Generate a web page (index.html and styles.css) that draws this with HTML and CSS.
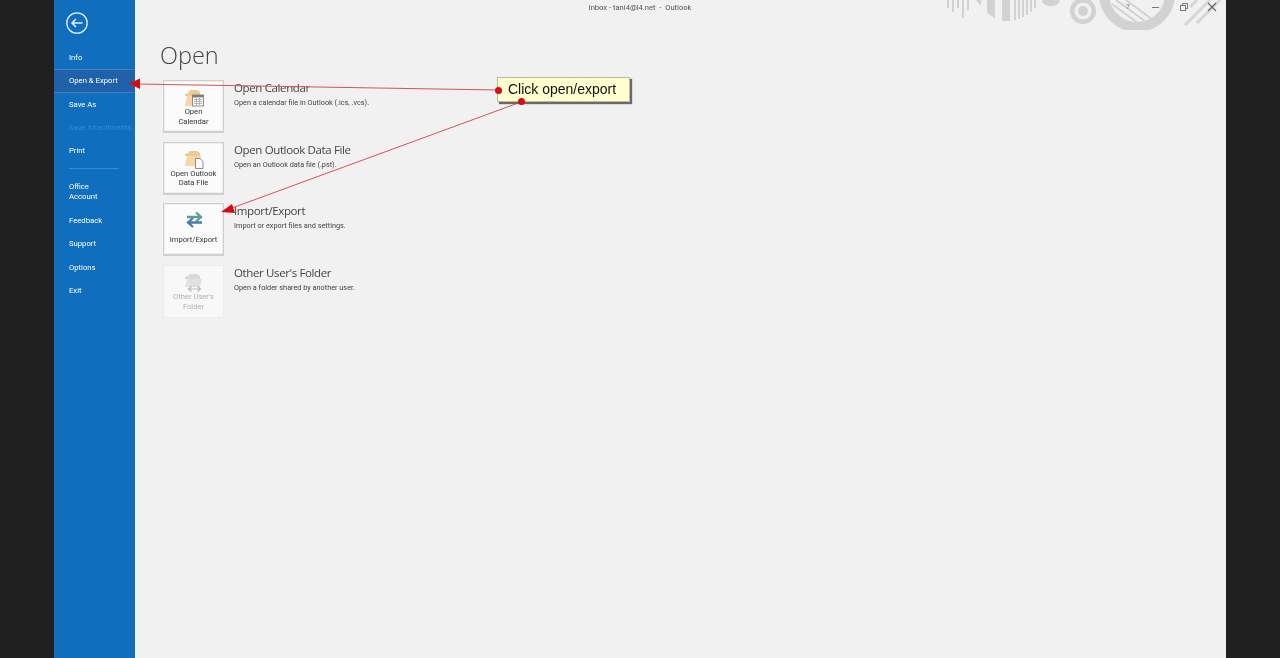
FILE: index.html
```html
<!DOCTYPE html>
<html lang="en">
<head>
<meta charset="utf-8">
<title>Open - Outlook</title>
<link rel="stylesheet" href="styles.css">
</head>
<body>
<div class="app">
  <nav class="side">
    <div class="back">
      <svg width="24" height="24" viewBox="0 0 24 24" fill="none" stroke="#e6f0fa"><circle cx="12" cy="12" r="10.2" stroke-width="1.3"/><path d="M17.5 12H7M11 8l-4 4 4 4" stroke-width="1.5"/></svg>
    </div>
    <ul class="menu">
      <li class="item">Info</li>
      <li class="item active">Open &amp; Export</li>
      <li class="item">Save As</li>
      <li class="item off">Save Attachments</li>
      <li class="item">Print</li>
      <li class="sep"></li>
      <li class="item two">Office<br>Account</li>
      <li class="item">Feedback</li>
      <li class="item">Support</li>
      <li class="item">Options</li>
      <li class="item">Exit</li>
    </ul>
  </nav>
  <main class="main">
    <header class="titlebar">Inbox - tani4@i4.net &nbsp;-&nbsp; Outlook</header>
    <h1 class="heading">Open</h1>
    <section class="rows">
      <div class="row">
        <div class="card">
          <svg class="ico" width="22" height="18" viewBox="1 1 22 18"><path d="M3 18V6l3-1 2-3h7l3 2v4H3z" fill="#eccb90"/><path d="M3 18l2-10h13v10z" fill="#f3d9a9"/><rect x="10.500" y="7" width="11" height="11" fill="#fafafa" stroke="#8c8c8c"/><rect x="10.500" y="7" width="11" height="2.400" fill="#7d7d7d"/><path d="M12 11.500h8M12 13.500h8M12 15.500h8M14.500 10v7M17.500 10v7" stroke="#a8a8a8" stroke-width=".8"/></svg>
          <span class="label">Open<br>Calendar</span>
        </div>
        <div class="text"><div class="name">Open Calendar</div><div class="desc">Open a calendar file in Outlook (.ics, .vcs).</div></div>
      </div>
      <div class="row">
        <div class="card">
          <svg class="ico" width="22" height="18" viewBox="1 1 22 18"><path d="M3 16V4l3-1 2-2h7l3 2v3H3z" fill="#eccb90"/><path d="M3 16l2-10h14v10z" fill="#f3d9a9"/><path d="M13.500 8.500h4.500l3 3v7h-7.500z" fill="#fafafa" stroke="#8c8c8c"/></svg>
          <span class="label">Open Outlook<br>Data File</span>
        </div>
        <div class="text"><div class="name">Open Outlook Data File</div><div class="desc">Open an Outlook data file (.pst).</div></div>
      </div>
      <div class="row">
        <div class="card">
          <svg class="ico" width="22" height="18" viewBox="1 1 22 18" fill="none" stroke-width="2.300"><path d="M5 6h14M14 1.500L19 6l-5 4.500" stroke="#5b9e94"/><path d="M20 11.500H6M11 7L6 11.500l5 4.500" stroke="#4b7ba8"/></svg>
          <span class="label single">Import/Export</span>
        </div>
        <div class="text"><div class="name">Import/Export</div><div class="desc">Import or export files and settings.</div></div>
      </div>
      <div class="row">
        <div class="card dim">
          <svg class="ico" width="22" height="18" viewBox="1 1 22 18"><path d="M3 14V4l3-1 2-2h7l3 2v3H3z" fill="#d8d8d8"/><path d="M3 14l2-8h15l-2 8z" fill="#e2e2e2"/><path d="M7 16h11M9.500 13.500l-3 2.500 3 2.500M15.500 13.500l3 2.500-3 2.500" fill="none" stroke="#b8b8b8" stroke-width="1.100"/></svg>
          <span class="label">Other User's<br>Folder</span>
        </div>
        <div class="text"><div class="name">Other User's Folder</div><div class="desc">Open a folder shared by another user.</div></div>
      </div>
    </section>
  </main>

  <svg class="deco" width="280" height="30" viewBox="0 0 280 30" fill="#d2d2d2">
    <g stroke="#d2d2d2" stroke-width="2" fill="none">
      <path d="M2 0v8M7 0v12M12 0v8M17 0v18M22 0v10"/>
    </g>
    <path d="M30 0l5 6V0z"/>
    <path d="M41 0v13l8 5V0z"/>
    <path d="M56 0h8v21h-8z"/>
    <g stroke="#d2d2d2" stroke-width="2"><path d="M69 0v20M73 0v19M77 0v17M81 0v15M85 0v12M89 0v8"/></g>
    <path d="M96 0c1 8 17 8 18 0z"/>
    <circle cx="137" cy="11" r="10.800" fill="none" stroke="#d2d2d2" stroke-width="4.500"/>
    <circle cx="137" cy="11" r="5"/>
    <circle cx="191" cy="-6" r="33" fill="none" stroke="#d2d2d2" stroke-width="10"/>
    <g stroke="#d2d2d2" stroke-width="2"><path d="M166 4l30 22M170 0l33 24M180 0l27 20"/></g>
    <g stroke="#d6d6d6" stroke-width="3"><path d="M239 25L264 0M251 23L274 0M244 7l7-7"/></g>
  </svg>

  <div class="winbtns">
    <span class="wb">?</span>
    <svg class="wb-ico" width="10" height="10" viewBox="0 0 10 10"><path d="M1 5.500h7" stroke="#777" stroke-width="1"/></svg>
    <svg class="wb-ico" width="10" height="10" viewBox="0 0 10 10" fill="none" stroke="#777"><rect x="1.500" y="3.500" width="5" height="5"/><path d="M3.500 3.500v-2h5v5h-2"/></svg>
    <svg class="wb-ico" width="10" height="10" viewBox="0 0 10 10"><path d="M1 1l8 8M9 1l-8 8" stroke="#666" stroke-width="1.100"/></svg>
  </div>

  <svg class="arrows" width="1280" height="658" viewBox="0 0 1280 658" fill="none">
    <path d="M498 90L136 84" stroke="#d2545c" stroke-width="1"/>
    <path d="M521 102L232 208" stroke="#d2545c" stroke-width="1"/>
    <path d="M129 83.500L140 78.500V89z" fill="#d90a12"/>
    <path d="M221 212L232 204l3 9z" fill="#d90a12"/>
  </svg>
  <div class="callout">
    <span class="dot dot-left"></span>
    <span class="dot dot-bottom"></span>
    Click open/export
  </div>
</div>
</body>
</html>
```
FILE: styles.css
```css
* { box-sizing: border-box; }
html, body { margin: 0; height: 100%; overflow: hidden; }
body { background: #202020; font-family: Roboto, "Open Sans", sans-serif; }
.app { position: relative; display: flex; width: 1172px; height: 658px; margin-left: 54px; background: #f1f1f1; filter: blur(.3px); }
.side { flex: none; width: 81px; height: 100%; background: #106ebe; color: #fff; }
.back { padding: 11px 0 0 11px; height: 46px; }
.menu { list-style: none; margin: 0; padding: 0; }
.item { height: 23.300px; padding-left: 15px; font-size: 7.700px; line-height: 23px; white-space: nowrap; }
.item.active { background: #1f62aa; border-top: 1px solid #477dba; border-bottom: 1px solid #477dba; line-height: 21px; }
.item.off { color: #3b8ad0; }
.item.two { height: 33.500px; line-height: 10px; padding-top: 7px; }
.sep { height: 1px; width: 50px; margin: 6px 0 6px 15px; background: #3d8bcf; }
.main { flex: 1; min-width: 0; }
.titlebar { height: 16px; padding-top: 3px; margin-left: -81px; text-align: center; font-size: 7.600px; line-height: 10px; color: #555; }
.heading { margin: 23px 0 0 25px; height: 41px; font-family: "Open Sans", sans-serif; font-size: 23.500px; line-height: 32px; font-weight: 300; color: #444; }
.rows { display: flex; flex-direction: column; gap: 8.700px; padding-left: 28px; }
.row { display: flex; gap: 10px; height: 53px; }
.card { flex: none; display: flex; flex-direction: column; align-items: center; width: 61px; height: 53px; padding-top: 8px; background: #fbfbfb; border: 1px solid #cfcfcf; border-bottom-width: 2px; box-shadow: inset 0 0 0 1px #eeeeee; }
.ico { flex: none; }
.label { font-size: 7.600px; line-height: 9.500px; text-align: center; color: #333; white-space: nowrap; }
.label.single { margin-top: 5px; }
.card.dim { background: #f8f8f8; border: 1px solid #ececec; box-shadow: none; }
.card.dim .label { color: #b0b0b0; }
.name { font-family: "Open Sans", sans-serif; font-size: 11.500px; letter-spacing: -.37px; line-height: 15px; color: #444; white-space: nowrap; }
.desc { font-size: 7.300px; line-height: 10px; margin-top: 3px; color: #444; white-space: nowrap; }
.deco { position: absolute; left: 892px; top: 0; }
.winbtns { position: absolute; top: 2px; right: 9px; display: flex; align-items: center; gap: 18px; }
.wb { width: 10px; font-size: 8px; line-height: 10px; text-align: center; color: #777; }
.wb-ico { display: block; }
.arrows { position: absolute; left: -54px; top: 0; pointer-events: none; }
.callout { position: absolute; left: 443px; top: 77px; width: 133px; height: 25px; background: #ffffcf; border: 1px solid #b9b9a0; box-shadow: 2px 2px 1px #6a6a6a; font-family: "Liberation Sans", sans-serif; font-size: 14px; line-height: 23px; padding-left: 10px; color: #111; white-space: nowrap; }
.dot { position: absolute; width: 7px; height: 7px; border-radius: 50%; background: #d90a12; }
.dot-left { left: -3px; top: 9px; }
.dot-bottom { left: 20px; bottom: -4px; }
```
